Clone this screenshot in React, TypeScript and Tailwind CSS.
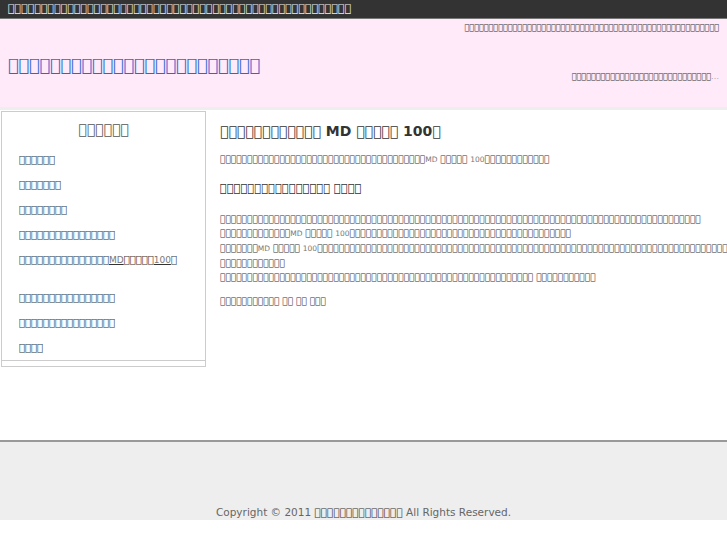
import React from "react";

// placeholder glyphs: the reference shows every Japanese character as a missing-glyph box
const t = (n: number) => "\uE000".repeat(n);

function Small({ children }: { children: React.ReactNode }) {
  return <span className="text-[7.5px] text-[#777]">{children}</span>;
}

const sideLinks: React.ReactNode[] = [
  t(6),
  t(7),
  t(8),
  t(16),
  <>
    {t(15)}
    <span className="text-[9px] text-[#777]">MD</span>
    {t(5)}
    <span className="text-[9px] text-[#777]">100</span>
    {t(1)}
  </>,
];

const sideLinks2 = [t(16), t(16), t(4)];

function LinkList({ items, className }: { items: React.ReactNode[]; className: string }) {
  return (
    <ul className={"flex flex-col gap-[11px] pl-[17px] text-[10px] leading-[14px] " + className}>
      {items.map((l, i) => (
        <li key={i}>
          <a href="#" className="underline text-[#333] whitespace-nowrap">{l}</a>
        </li>
      ))}
    </ul>
  );
}

export default function App() {
  return (
    <div className="w-[727px] min-h-[545px] bg-white text-[#333] font-['DejaVu_Sans',sans-serif]">
      <div className="h-[19px] bg-[#333] border-b border-[#777] px-2 text-[11px] leading-[18px] text-[#eee] whitespace-nowrap overflow-hidden">
        {t(52)}
      </div>

      <div className="h-[91px] bg-[#ffeafa] border-b-[3px] border-[#eee] flex justify-between px-2">
        <div className="pt-[33px] text-[17.5px] text-[#3366cc] whitespace-nowrap">{t(24)}</div>
        <div className="flex flex-col items-end text-[8px] text-[#333] whitespace-nowrap">
          <div className="pt-[3px]">{t(53)}</div>
          <div className="pt-[37px]">{t(29)}<span className="text-[#aaa]">…</span></div>
        </div>
      </div>

      <div className="flex h-[330px]">
        <div className="w-[206px] shrink-0 pt-[1px] pl-[1px]">
          <div className="border border-[#ccc] h-[256px] flex flex-col">
            <div className="text-center text-[14px] leading-[18px] text-[#555] pt-[8px]">{t(6)}</div>
            <LinkList items={sideLinks} className="mt-[15px]" />
            <LinkList items={sideLinks2} className="mt-[24px]" />
            <div className="mt-auto mb-[5px] border-b border-[#ccc]" />
          </div>
        </div>

        <div className="flex-1 min-w-0 pl-[14px] pt-[12px] text-[9px] leading-[14px] overflow-hidden">
          <h1 className="text-[14px] leading-[18px] font-bold text-[#333] whitespace-nowrap">
            {t(12)} MD {t(5)} 100{t(1)}
          </h1>
          <p className="mt-[12px] whitespace-nowrap">
            {t(38)}<Small>MD</Small> {t(5)} <Small>100</Small>{t(12)}
          </p>
          <h2 className="mt-[13px] text-[11.5px] leading-[16px] whitespace-nowrap">{t(16)} {t(4)}</h2>
          <p className="mt-[16px] whitespace-nowrap">
            {t(89)}
            <br />
            {t(13)}<Small>MD</Small> {t(5)} <Small>100</Small>{t(41)}
            <br />
            {t(7)}<Small>MD</Small> {t(5)} <Small>100</Small>{t(76)}
            <br />
            {t(12)}
            <br />
            {t(58)} {t(11)}
          </p>
          <p className="mt-[10px] whitespace-nowrap">
            {t(11)} {t(2)} {t(2)} {t(3)}
          </p>
        </div>
      </div>

      <div className="h-[80px] bg-[#eee] border-t-2 border-[#999] flex items-end justify-center text-[10.5px] leading-[14px] text-[#666]">
        <div className="pb-[1px]">
          Copyright © 2011 <a href="#" className="underline text-[#333]">{t(14)}</a> All Rights Reserved.
        </div>
      </div>
    </div>
  );
}
